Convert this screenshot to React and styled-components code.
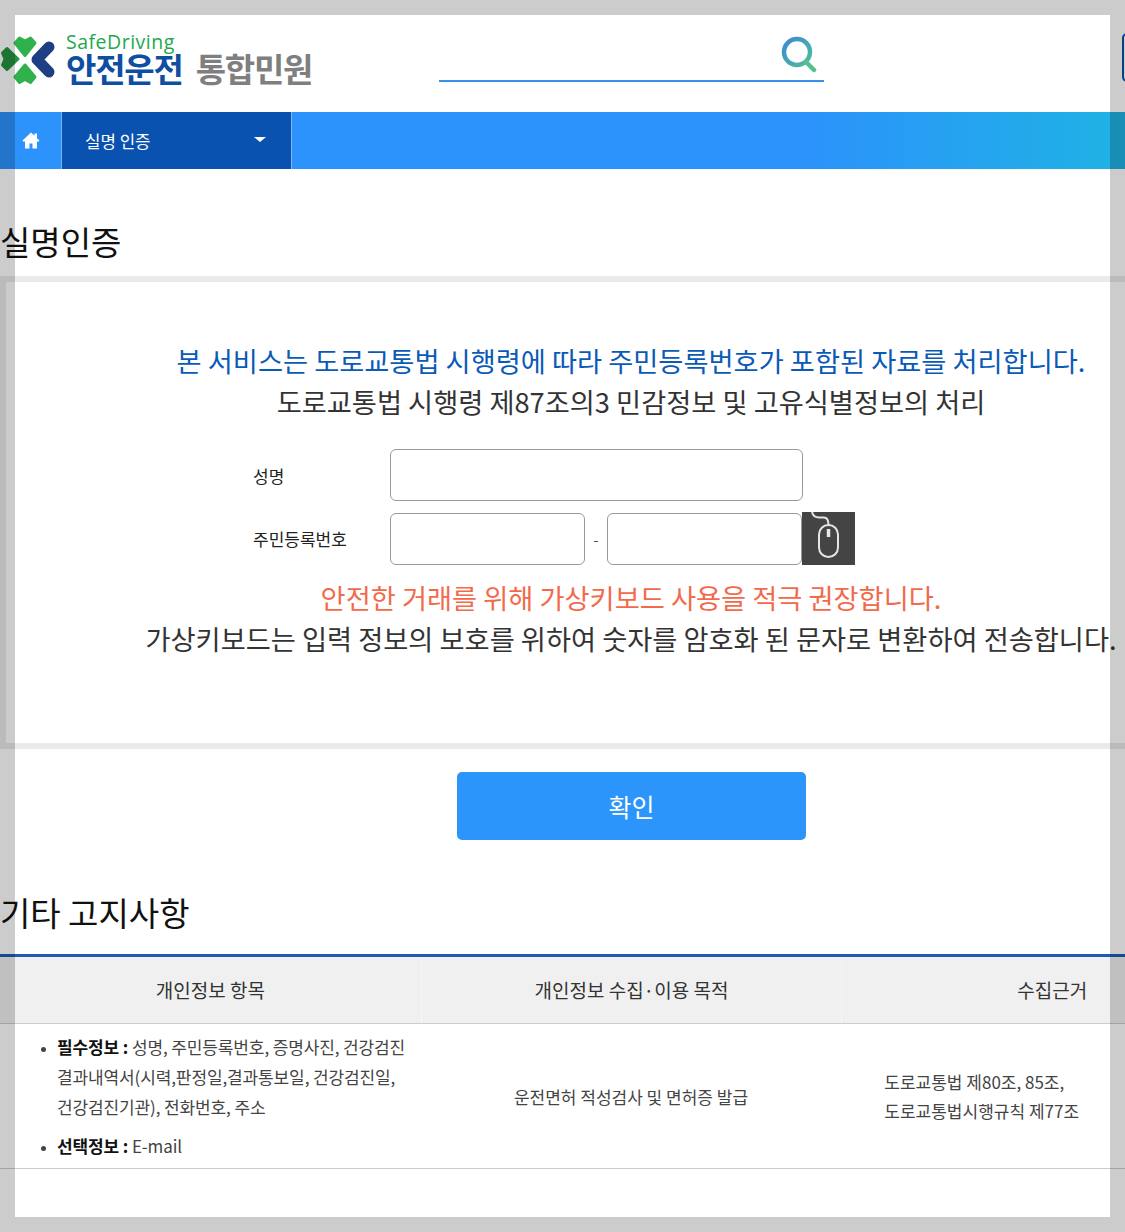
import React from "react";
import styled, { createGlobalStyle } from "styled-components";

const Global = createGlobalStyle`
    html, body {
        margin: 0;
        padding: 0;
        height: 1232px;
        overflow: hidden;
        background: #fff;
    }
    * { box-sizing: border-box; }
`;

// the grey frame lies over the whole page
const Frame = styled.div`
    position: fixed;
    inset: 0;
    border: 15px solid rgba(0, 0, 0, 0.2);
    pointer-events: none;
    z-index: 10;
`;

const Page = styled.div`
    width: 1262px;
    font-family: "Noto Sans CJK KR", "Noto Sans", sans-serif;
    color: #222;
`;

const Header = styled.header`
    height: 112px;
    display: grid;
    grid-template-columns: 439px 385px 1fr;
    position: relative;
`;

const Logo = styled.div`
    display: flex;
    align-items: flex-start;
    padding-top: 33px;
`;

const LogoText = styled.div`
    margin-left: 10px;
    display: flex;
    flex-direction: column;
`;

const Safe = styled.span`
    font-family: "Open Sans", sans-serif;
    font-size: 19.5px;
    font-weight: 500;
    line-height: 18px;
    color: #22a84f;
    letter-spacing: 0.5px;
`;

const LogoTitle = styled.div`
    display: flex;
    gap: 13px;
    margin-top: 1px;
    font-size: 33px;
    line-height: 33px;
    font-weight: 700;
    letter-spacing: -1.2px;
`;

const LogoBlue = styled.span`
    color: #0f4fa3;
`;

const LogoGrey = styled.span`
    color: #7f7f7f;
`;

const Search = styled.div`
    height: 82px;
    border-bottom: 2px solid #3a8fe6;
    display: flex;
    justify-content: flex-end;
    align-items: flex-start;
    padding: 36px 7px 0 0;
`;

const SideBtn = styled.div`
    position: absolute;
    left: 1122px;
    top: 33px;
    width: 60px;
    height: 49px;
    border: 2px solid #0f4fa3;
    border-radius: 5px;
`;

const Nav = styled.nav`
    height: 57px;
    display: flex;
    width: 1125px;
    background: linear-gradient(90deg, #2b93fb 0%, #2b93fb 72%, #1fb3e4 100%);
`;

const HomeCell = styled.div`
    width: 62px;
    display: flex;
    align-items: center;
    justify-content: center;
    border-right: 1px solid #7cb6f2;
`;

const NavSelect = styled.div`
    width: 230px;
    background: #0a52b0;
    border-right: 1px solid #7cb6f2;
    display: flex;
    align-items: center;
    justify-content: space-between;
    padding: 0 25px 0 23px;
    font-size: 16.8px;
    color: #fff;
`;

const Caret = styled.span`
    width: 0;
    height: 0;
    border-left: 6px solid transparent;
    border-right: 6px solid transparent;
    border-top: 5px solid #fff;
    margin-bottom: 3px;
`;

const SectionTitle = styled.h2`
    margin: ${props => props.$top}px 0 ${props => props.$bottom}px;
    font-size: 33px;
    line-height: 50px;
    font-weight: 400;
    color: #111;
`;

const Panel = styled.section`
    height: 473px;
    border: 6px solid #eaeaea;
    padding-top: 58px;
`;

const Line = styled.p`
    margin: ${props => props.$top || 0}px 0 0;
    font-size: 27.25px;
    line-height: 41px;
    text-align: center;
    white-space: nowrap;
    color: ${props => props.$color || "#333"};
`;

const Form = styled.div`
    margin-top: 27px;
    padding-left: 247px;
    display: flex;
    flex-direction: column;
    gap: 11px;
`;

const FormRow = styled.div`
    display: flex;
    align-items: center;
    height: ${props => props.$h}px;
`;

const Label = styled.label`
    width: 137px;
    font-size: 17px;
    color: #222;
`;

const Input = styled.input`
    width: ${props => props.$w}px;
    height: 52px;
    border: 1px solid #999;
    border-radius: 6px;
    background: #fff;
`;

const Dash = styled.span`
    width: 22px;
    text-align: center;
    font-size: 14px;
    color: #444;
`;

const MouseBtn = styled.button`
    width: 53px;
    height: 53px;
    border: 0;
    padding: 0;
    background: #444;
    display: block;
`;

const Submit = styled.button`
    display: block;
    width: 349px;
    height: 68px;
    margin: 23px 0 0 457px;
    border: 0;
    border-radius: 5px;
    background: #2b95fb;
    color: #fff;
    font-family: inherit;
    font-size: 25px;
`;

const Table = styled.table`
    width: 1262px;
    border-collapse: separate;
    border-spacing: 0;
    table-layout: fixed;
    border-top: 3px solid #1c5cb4;
`;

const Th = styled.th`
    height: 67px;
    padding-bottom: 2px;
    background: #f0f0f0;
    border-bottom: 1px solid #ccc;
    border-left: 1px solid #f5f5f5;
    font-size: 19px;
    font-weight: 400;
    color: #333;
    &:first-child { border-left: 0; }
`;

const Td = styled.td`
    height: 145px;
    border-bottom: 1px solid #ccc;
    font-size: 17px;
    line-height: 29px;
    color: #444;
    text-align: center;
`;

const List = styled.ul`
    margin: 0;
    padding: 0 10px 0 56px;
    text-align: left;
    line-height: 30px;
    word-break: keep-all;
    letter-spacing: -0.12px;
`;

const Item = styled.li`
    margin-bottom: ${props => props.$gap || 0}px;
    &::marker { font-size: 12px; }
`;

const Strong = styled.b`
    color: #111;
    font-weight: 700;
`;

const Basis = styled.div`
    text-align: left;
    padding-left: 42px;
`;

function LogoMark() {
    return (
        <svg width="56" height="53" viewBox="0 0 56 53">
            <g strokeLinejoin="round" strokeWidth="3">
                <path d="M25 22.500L15 10l4.500-5L25 8l5.500-3L35 10z" fill="#2fb24c" stroke="#2fb24c" />
                <path d="M25 32L15 44l4.500 5.500 5.500-3 5.500 3L35 44z" fill="#2fb24c" stroke="#2fb24c" />
                <path d="M18 26L7 15.500 2.500 20 5 26l-2.500 6L7 36.500z" fill="#23933f" stroke="#23933f" />
            </g>
            <path d="M49 14L37 26.500 49 39" fill="none" stroke="#1f3f85" strokeWidth="11" strokeLinecap="round" strokeLinejoin="round" />
        </svg>
    );
}

function SearchIcon() {
    return (
        <svg width="36" height="38" viewBox="0 0 36 38">
            <defs>
                <linearGradient id="sg" x1="0" y1="0" x2="1" y2="1">
                    <stop offset="0" stopColor="#3a8bd4" />
                    <stop offset="1" stopColor="#50bd9a" />
                </linearGradient>
            </defs>
            <circle cx="16" cy="16" r="13" fill="none" stroke="url(#sg)" strokeWidth="4.500" />
            <path d="M25 26l8 8" stroke="#55c08e" strokeWidth="4.500" strokeLinecap="round" />
        </svg>
    );
}

function HomeIcon() {
    return (
        <svg width="18" height="17" viewBox="0 0 18 17" fill="#fff">
            <path d="M9 0.500L0.500 8.500 2 10l1-0.900V16.500h4.500v-5h3v5H15V9.100l1 .9 1.500-1.500L15 6.200V1.500h-2.500v2.300z" />
        </svg>
    );
}

function MouseIcon() {
    return (
        <svg width="53" height="53" viewBox="0 0 53 53" fill="none" stroke="#e6e6e6" strokeWidth="2">
            <rect x="17" y="13" width="19" height="32" rx="9.500" />
            <path d="M10 0c1 4 3 5.500 7 5.500h5c3 0 4.500 2.500 4.500 7.500" />
            <path d="M26.500 17v8" strokeWidth="3.500" />
        </svg>
    );
}

export default function App() {
    return (
        <>
            <Global />
            <Frame />
            <Page>
                <Header>
                    <Logo>
                        <LogoMark />
                        <LogoText>
                            <Safe>SafeDriving</Safe>
                            <LogoTitle>
                                <LogoBlue>안전운전</LogoBlue>
                                <LogoGrey>통합민원</LogoGrey>
                            </LogoTitle>
                        </LogoText>
                    </Logo>
                    <Search>
                        <SearchIcon />
                    </Search>
                    <SideBtn />
                </Header>
                <Nav>
                    <HomeCell><HomeIcon /></HomeCell>
                    <NavSelect>
                        실명 인증
                        <Caret />
                    </NavSelect>
                </Nav>

                <SectionTitle $top={47} $bottom={10}>실명인증</SectionTitle>
                <Panel>
                    <Line $color="#0a5ab8">본 서비스는 도로교통법 시행령에 따라 주민등록번호가 포함된 자료를 처리합니다.</Line>
                    <Line>도로교통법 시행령 제87조의3 민감정보 및 고유식별정보의 처리</Line>
                    <Form>
                        <FormRow $h={52}>
                            <Label>성명</Label>
                            <Input $w={413} />
                        </FormRow>
                        <FormRow $h={53}>
                            <Label>주민등록번호</Label>
                            <Input $w={195} />
                            <Dash>-</Dash>
                            <Input $w={195} />
                            <MouseBtn><MouseIcon /></MouseBtn>
                        </FormRow>
                    </Form>
                    <Line $top={12} $color="#f26a4b">안전한 거래를 위해 가상키보드 사용을 적극 권장합니다.</Line>
                    <Line>가상키보드는 입력 정보의 보호를 위하여 숫자를 암호화 된 문자로 변환하여 전송합니다.</Line>
                </Panel>
                <Submit>확인</Submit>

                <SectionTitle $top={47} $bottom={17}>기타 고지사항</SectionTitle>
                <Table>
                    <thead>
                        <tr>
                            <Th>개인정보 항목</Th>
                            <Th>개인정보 수집·이용 목적</Th>
                            <Th>수집근거</Th>
                        </tr>
                    </thead>
                    <tbody>
                        <tr>
                            <Td>
                                <List>
                                    <Item $gap={9}><Strong>필수정보 :</Strong> 성명, 주민등록번호, 증명사진, 건강검진 결과내역서(시력,판정일,결과통보일, 건강검진일, 건강검진기관), 전화번호, 주소</Item>
                                    <Item><Strong>선택정보 :</Strong> E-mail</Item>
                                </List>
                            </Td>
                            <Td>운전면허 적성검사 및 면허증 발급</Td>
                            <Td>
                                <Basis>도로교통법 제80조, 85조,<br />도로교통법시행규칙 제77조</Basis>
                            </Td>
                        </tr>
                    </tbody>
                </Table>
            </Page>
        </>
    );
}
